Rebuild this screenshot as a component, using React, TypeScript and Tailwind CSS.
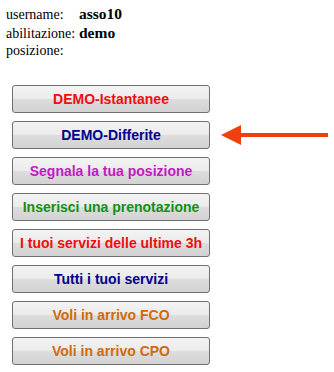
const buttons = [
  { label: "DEMO-Istantanee", color: "text-[#ee0f0f]" },
  { label: "DEMO-Differite", color: "text-[#000090]", arrow: true },
  { label: "Segnala la tua posizione", color: "text-[#c21bc2]" },
  { label: "Inserisci una prenotazione", color: "text-[#119111]" },
  { label: "I tuoi servizi delle ultime 3h", color: "text-[#ee0f0f]" },
  { label: "Tutti i tuoi servizi", color: "text-[#000090]" },
  { label: "Voli in arrivo FCO", color: "text-[#cf6a0c]" },
  { label: "Voli in arrivo CPO", color: "text-[#cf6a0c]" },
];

const Arrow = () => (
  <svg width="107" height="22" viewBox="0 0 107 22" className="shrink-0">
    <polygon points="0,11 20,1 20,21" fill="#f0400f" />
    <rect x="18" y="9" width="89" height="4" fill="#f0400f" />
  </svg>
);

const App = () => {
  return (
    <div className="w-[334px] h-[372px] bg-white overflow-hidden">
      <div className="pl-[6px] pt-[5px] font-['Liberation_Serif',serif] text-[14px] leading-[18.5px] text-black">
        <div className="grid grid-cols-[73px_auto] grid-rows-[18.5px_18.5px_18.5px] items-baseline">
          <span>username:</span>
          <span className="font-bold text-[15.5px] leading-[18.5px]">asso10</span>
          <span>abilitazione:</span>
          <span className="font-bold text-[15.5px] leading-[18.5px]">demo</span>
          <span>posizione:</span>
          <span></span>
        </div>
      </div>
      <div className="mt-[24px] pl-[12px] flex flex-col gap-[8px]">
        {buttons.map((b) => (
          <div key={b.label} className="flex items-center gap-[11px]">
            <button
              className={`w-[198px] h-[28px] shrink-0 rounded-[3px] border border-[#707070] bg-[linear-gradient(#f3f3f3_0%,#ebebeb_50%,#dddddd_50%,#d2d2d2_100%)] font-['Liberation_Sans',Arial,sans-serif] text-[14px] font-bold leading-none ${b.color}`}
            >
              {b.label}
            </button>
            {b.arrow && <Arrow />}
          </div>
        ))}
      </div>
    </div>
  );
};

export default App;
